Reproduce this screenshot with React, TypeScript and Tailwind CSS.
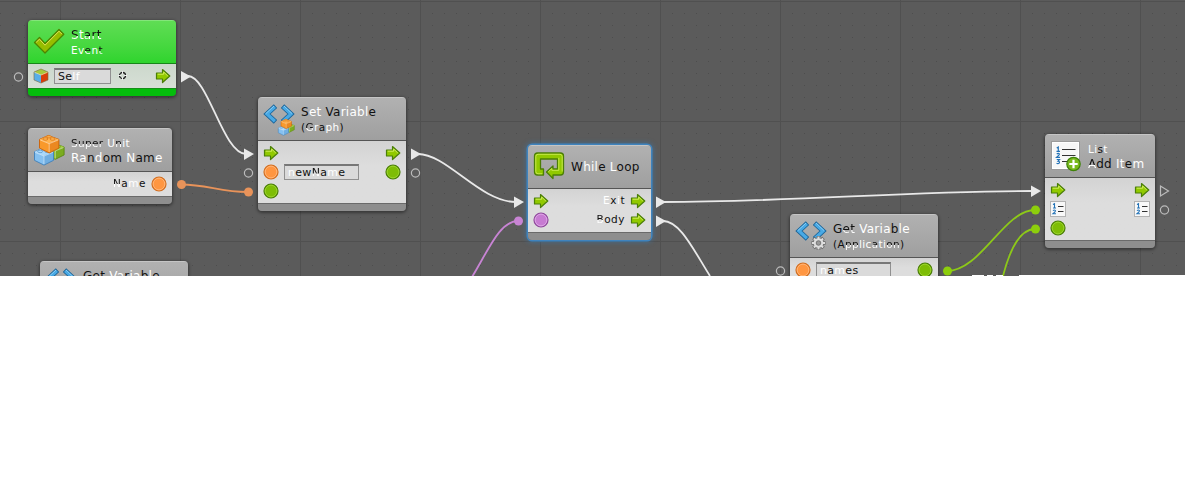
import type { ReactNode } from "react";

/* Lettering is alternately dark and light. "d:" dark, "w:" white, "m:" dark above / white below */
function Ink({ parts }: { parts: string[] }) {
  return (
    <span className="whitespace-pre">
      {parts.map((p, i) => {
        const tone = p[0];
        const cls =
          tone === "w"
            ? "text-white"
            : tone === "m"
              ? "bg-linear-to-b from-[#111] from-55% to-white to-60% bg-clip-text text-transparent"
              : "text-[#111]";
        return (
          <span key={i} className={cls}>
            {p.slice(2)}
          </span>
        );
      })}
    </span>
  );
}

function Arrow() {
  return (
    <svg width="16" height="16" viewBox="0 0 16 16" className="shrink-0">
      <path d="M1.500 5H7.500V1.500L14.800 8L7.500 14.500V11H1.500Z" fill="#91c900" stroke="#4b7f08" strokeWidth="1.2" strokeLinejoin="round" />
      <path d="M2.700 6.200H8.700V4L12.800 8" fill="none" stroke="#d0ee5b" strokeWidth="1" />
    </svg>
  );
}

const dots = {
  orange: ["#ff9641", "#d06e22", "#ffba80"],
  green: ["#7ebd05", "#4a7d08", "#a0d735"],
  purple: ["#c77bd2", "#8f4a9c", "#e1ace8"],
};

function Dot({ c }: { c: keyof typeof dots }) {
  const [fill, edge, lite] = dots[c];
  return (
    <svg width="16" height="16" viewBox="0 0 16 16" className="shrink-0">
      <circle cx="8" cy="8" r="7" fill={fill} stroke={edge} strokeWidth="1.2" />
      <circle cx="8" cy="8" r="5.800" fill="none" stroke={lite} strokeWidth=".8" />
    </svg>
  );
}

function Cube() {
  return (
    <svg width="16" height="16" viewBox="0 0 16 16" className="shrink-0">
      <path d="M1 4L8 1L15 4L8 7Z" fill="#a6c83c" />
      <path d="M1 4L8 7V15L1 12Z" fill="#58aee8" />
      <path d="M15 4L8 7V15L15 12Z" fill="#d93d0b" />
      <path d="M1 4L8 1L15 4V12L8 15L1 12Z" fill="none" stroke="#786b42" strokeWidth=".6" />
      <path d="M1.500 4.300L8 7L14.500 4.300" fill="none" stroke="#f1dc9b" strokeWidth=".7" />
    </svg>
  );
}

function MiniList() {
  return (
    <svg width="16" height="16" viewBox="0 0 16 16" className="shrink-0">
      <rect x=".5" y=".5" width="15" height="15" fill="#f8f8f8" stroke="#b3b3b3" />
      <path d="M8 5.500H13.500M8 10.500H13.500" stroke="#333" />
      <path d="M3 3.500L4.500 2.700V7M3 7H6M3 9.700Q4.500 8.300 5.500 9.700Q5.500 10.500 3 12.700H6" fill="none" stroke="#2473b7" strokeWidth="1.1" />
    </svg>
  );
}

function Brick({ x, y, s = 1, c }: { x: number; y: number; s?: number; c: string[] }) {
  return (
    <g transform={`translate(${x} ${y}) scale(${s})`}>
      <path d="M0 4L9 0L20 4V13L10 18L0 13Z" fill={c[0]} stroke={c[2]} strokeWidth="1" strokeLinejoin="round" />
      <path d="M0 4L9 0L20 4L10 8Z" fill={c[1]} />
      <path d="M10 8L20 4V13L10 18Z" fill={c[2]} opacity=".3" />
      <path d="M.7 4.600L10 8.400L19.400 4.600M10 8.400V17" fill="none" stroke="#fff" strokeOpacity=".55" strokeWidth=".9" />
      <ellipse cx="6" cy="3.600" rx="2.600" ry="1.300" fill={c[1]} stroke={c[2]} strokeWidth=".6" />
      <ellipse cx="13.500" cy="3.600" rx="2.600" ry="1.300" fill={c[1]} stroke={c[2]} strokeWidth=".6" />
      <ellipse cx="9.700" cy="1.300" rx="2.400" ry="1.200" fill={c[1]} stroke={c[2]} strokeWidth=".6" />
    </g>
  );
}

const blue = ["#85c1f1", "#a9d8fb", "#4383bc"];
const orange = ["#f9992b", "#ffb34f", "#cb640b"];
const green = ["#8abc26", "#a9d540", "#5a8914"];

function BrickStack() {
  return (
    <>
      <Brick x={13.5} y={9.5} s={0.88} c={green} />
      <Brick x={1.5} y={14} s={0.95} c={blue} />
      <Brick x={6.5} y={1.5} s={0.97} c={orange} />
    </>
  );
}

function Bricks() {
  return (
    <svg width="32" height="32" viewBox="0 0 32 32" className="shrink-0">
      <BrickStack />
    </svg>
  );
}

function Check() {
  return (
    <svg width="32" height="32" viewBox="0 0 32 32" className="shrink-0">
      <path d="M1.500 16.500L6.500 11.500L12 17.500L26 3.500L30.800 8.300L12 27Z" fill="#96bd00" stroke="#4d8500" strokeWidth="1.3" strokeLinejoin="round" />
      <path d="M3.200 16.300L6.500 13.200L12 19.200L26 5.200L28.800 8" fill="none" stroke="#e1df59" strokeWidth="1" />
    </svg>
  );
}

function Gear() {
  return (
    <g transform="translate(23.5 23)">
      <g stroke="#666" strokeWidth="3.6">
        <path d="M0 -7V7M-7 0H7M-5 -5L5 5M-5 5L5 -5" />
      </g>
      <g stroke="#ddd" strokeWidth="2.1">
        <path d="M0 -6.500V6.500M-6.500 0H6.500M-4.600 -4.600L4.600 4.600M-4.600 4.600L4.600 -4.600" />
      </g>
      <circle r="4.800" fill="#ddd" />
      <circle r="2.300" fill="#999" stroke="#666" strokeWidth=".8" />
    </g>
  );
}

function Variable({ badge }: { badge?: "bricks" | "gear" }) {
  return (
    <svg width="32" height="32" viewBox="0 0 32 32" className="shrink-0 overflow-visible">
      <g fill="none">
        <path d="M12.500 3.200L4 11L12.500 18.800M19.500 3.200L28 11L19.500 18.800" stroke="#1c6599" strokeWidth="5" />
        <path d="M11.900 3.700L4 11L11.900 18.300M20.100 3.700L28 11L20.100 18.300" stroke="#48a9e5" strokeWidth="3.2" />
        <path d="M11 3L2.700 10.700M21 3L29 10.500" stroke="#91d2f8" strokeWidth=".9" />
      </g>
      {badge === "gear" && <Gear />}
      {badge === "bricks" && (
        <g transform="translate(14.500 15.500) scale(.54)">
          <BrickStack />
        </g>
      )}
    </svg>
  );
}

function Loop() {
  return (
    <svg width="32" height="32" viewBox="0 0 32 32" className="shrink-0">
      <path
        d="M4.500 2H27.500Q30.500 2 30.500 5V21Q30.500 24 27.500 24H20V27.500L13.500 21L20 15V18H24.500V8H7.500V18H10.500V24H4.500Q1.500 24 1.500 21V5Q1.500 2 4.500 2Z"
        fill="#91c900" stroke="#4b7e05" strokeWidth="1.3" strokeLinejoin="round"
      />
      <path d="M9.300 22.800H5Q2.800 22.800 2.800 20.500V5.500Q2.800 3.300 5 3.300H27Q29.200 3.300 29.200 5.500V20.500M15.300 20.800L18.800 17.500V19.300H25.800V6.800" fill="none" stroke="#cdec55" strokeWidth=".9" />
    </svg>
  );
}

function ListAdd() {
  return (
    <svg width="32" height="32" viewBox="0 0 32 32" className="shrink-0 overflow-visible">
      <rect x="1.500" y="1.500" width="28" height="28" fill="#f7f7f7" stroke="#9b9b9b" />
      <rect x="2.500" y="2.500" width="26" height="26" fill="none" stroke="#fff" />
      <path d="M12 9.500H25.500M12 15.500H25.500M12 21.500H18" stroke="#333" />
      <path
        d="M6.700 8L8.300 7V11.300M6.500 11.300H10M6.700 14Q8.500 12.700 9.500 14Q9.500 15 6.700 17.300H10M6.700 19.500H9.500L8 21.200Q9.800 21.300 9.400 22.800Q8.300 24 6.500 23.300"
        fill="none" stroke="#2473b7" strokeWidth="1.2"
      />
      <circle cx="23.500" cy="24" r="6.700" fill="#79b91c" stroke="#3f8209" strokeWidth="1.2" />
      <path d="M23.500 19.800V28.200M19.300 24H27.700" stroke="#fff" strokeWidth="2.2" />
    </svg>
  );
}

function Field({ wide = false, children }: { wide?: boolean; children: ReactNode }) {
  return (
    <div className={`${wide ? "w-[75px]" : "w-[57px]"} mt-px ml-[5px] flex h-4 items-center border border-t-2 border-[#909090] border-t-[#777] bg-[#dadada] pl-[3px] text-[11px] leading-[13px] tracking-[0.3px]`}>
      {children}
    </div>
  );
}

function Row({ children }: { children: ReactNode }) {
  return <div className="flex h-[19px] items-center px-[5px]">{children}</div>;
}

interface NodeProps {
  place: string;
  icon: ReactNode;
  title: ReactNode;
  children?: ReactNode;
  event?: boolean;
  selected?: boolean;
}

function Node({ place, icon, title, children, event, selected }: NodeProps) {
  const glow = selected
    ? "shadow-[0_0_0_1.5px_#3f83bd,0_0_5px_2px_#397bb499]"
    : "shadow-[0_1px_3px_1px_rgba(0,0,0,0.38)]";
  const head = event
    ? "from-[#5fdd54] to-[#2ed42d] border-[#168718] border-t-[#83e57a]"
    : "from-[#b1b1b1] to-[#9f9f9f] border-[#555] border-t-[#c5c5c5]";
  return (
    <section className={`absolute overflow-hidden rounded-[4px] ${place} ${glow}`}>
      <header className={`flex h-11 items-start border-t border-b bg-linear-to-b pt-[5px] pl-[5px] ${head}`}>
        {icon}
        <div className="flex h-8 flex-col justify-center pt-px pl-1.5">{title}</div>
      </header>
      <div className={`pt-[2px] pb-[3px] ${event ? "bg-linear-to-b from-[#ccd8cc] to-[#d7dfd6]" : "bg-linear-to-b from-[#d3d3d3] to-[#dddddd] to-40%"}`}>
        {children}
      </div>
      <footer className={`h-2 border-t ${event ? "border-[#159018] bg-[#04bd0c]" : "border-[#6a6a6a] bg-[#8e8e8e]"}`} />
    </section>
  );
}

function Big({ parts }: { parts: string[] }) {
  return <div className="h-[15px] text-[12px] leading-[15px] tracking-[0.25px]"><Ink parts={parts} /></div>;
}
function Small({ parts }: { parts: string[] }) {
  return <div className="h-[15px] text-[10.5px] leading-[15px] tracking-[0.35px]"><Ink parts={parts} /></div>;
}
function Label({ parts }: { parts: string[] }) {
  return <div className="mr-[5px] ml-auto text-[10.5px] leading-[13px] tracking-[0.5px]"><Ink parts={parts} /></div>;
}

function Wires() {
  return (
    <svg width="1185" height="276" className="absolute inset-0">
      <g fill="none" strokeWidth="1.8">
        <g stroke="#e9e9e9">
          <path d="M188 76C208 76 223 154 246 154" />
          <path d="M418 154C447 154 480 202 516 202" />
          <path d="M663 202C790 202 910 191 1033 191" />
          <path d="M663 221C680 221 693 249 710 276" />
        </g>
        <path d="M181 184.500C207 184.500 220 192 248 192" stroke="#e8935a" />
        <path d="M518 221C500 221 489 249 472 277" stroke="#c884d4" />
        <path d="M947 271C981 271 1004 210 1035 210" stroke="#8dc918" />
        <path d="M1035 229C1020 229 1010 249 1003 276" stroke="#8dc918" />
      </g>
      <g fill="#e9e9e9">
        <path d="M181 71V82.500L191 76.500Z" />
        <path d="M244 148.500V160L254 154Z" />
        <path d="M411 148.500V160L421 154Z" />
        <path d="M514 196.500V208L524 202Z" />
        <path d="M656 196.500V208L666 202Z" />
        <path d="M656 215.500V227L666 221Z" />
        <path d="M1031 185.500V197L1041 191Z" />
      </g>
      <circle cx="181.500" cy="184.500" r="4.500" fill="#e8935a" />
      <circle cx="248.500" cy="192" r="4.500" fill="#e8935a" />
      <circle cx="518.500" cy="221" r="4.500" fill="#c884d4" />
      <g fill="#8dce0c">
        <circle cx="947.500" cy="271" r="4.500" />
        <circle cx="1035.500" cy="210" r="4.500" />
        <circle cx="1035.500" cy="229" r="4.500" />
      </g>
      <g fill="none" stroke="#bcbcbc" strokeWidth="1.2">
        <circle cx="18.500" cy="77" r="4.100" />
        <circle cx="248.500" cy="173" r="4.100" />
        <circle cx="415.500" cy="173" r="4.100" />
        <circle cx="780.500" cy="271" r="4.100" />
        <circle cx="1164.500" cy="210" r="4.100" />
        <path d="M1160.500 186V196L1168.500 191Z" />
      </g>
      <path d="M972 275.500H984M987 275.500H993M996 275.500H1003M1019 275.500H1185" stroke="#fff" />
    </svg>
  );
}

function Grid() {
  return (
    <svg width="1185" height="276" className="absolute inset-0">
      <defs>
        <pattern id="dots" width="12" height="12" patternUnits="userSpaceOnUse">
          <rect x="0" y="1" width="1" height="1" fill="#4d4d4d" />
        </pattern>
        <pattern id="lines" width="120" height="120" patternUnits="userSpaceOnUse" x="60" y="1">
          <path d="M.5 0V120M0 .5H120" stroke="#505050" />
        </pattern>
      </defs>
      <rect width="1185" height="276" fill="url(#dots)" />
      <rect width="1185" height="276" fill="url(#lines)" />
    </svg>
  );
}

export default function App() {
  return (
    <main className="h-[487px] w-[1185px] overflow-hidden bg-white font-['DejaVu_Sans',sans-serif]">
      <div className="relative h-[276px] overflow-hidden bg-[#5b5b5b]">
        <Grid />
        <Node event place="left-[28px] top-[20px] w-[148px]" icon={<Check />}
          title={<><Big parts={["m:S", "w:t", "m:art"]} /><Small parts={["w:Ev", "m:e", "w:n", "m:t"]} /></>}>
          <Row>
            <Cube />
            <Field><Ink parts={["d:Se", "w:lf"]} /></Field>
            <svg width="9" height="9" viewBox="0 0 9 9" className="ml-[7px]">
              <circle cx="4.500" cy="4.500" r="3" fill="none" stroke="#222" strokeWidth="1.300" />
              <path d="M4.500 0V3M4.500 6V9M0 4.500H3M6 4.500H9" stroke="#eee" />
            </svg>
            <div className="ml-auto flex"><Arrow /></div>
          </Row>
        </Node>
        <Node place="left-[28px] top-[128px] w-[144px]" icon={<Bricks />}
          title={<><Small parts={["m:Super", "w: U", "m:n", "w:it"]} /><Big parts={["w:Ra", "d:n", "w:d", "d:om", "w: N", "d:am", "w:e"]} /></>}>
          <Row><Label parts={["m:N", "d:a", "w:m", "d:e"]} /><Dot c="orange" /></Row>
        </Node>
        <Node place="left-[258px] top-[97px] w-[148px]" icon={<Variable badge="bricks" />}
          title={<><Big parts={["d:S", "w:et", "d: Va", "w:riabl", "d:e"]} /><Small parts={["d:(", "m:G", "w:r", "d:a", "w:ph", "d:)"]} /></>}>
          <Row><Arrow /><div className="ml-auto"><Arrow /></div></Row>
          <Row><Dot c="orange" /><Field wide><Ink parts={["w:n", "d:ew", "m:N", "d:a", "w:m", "d:e"]} /></Field><div className="ml-auto"><Dot c="green" /></div></Row>
          <Row><Dot c="green" /></Row>
        </Node>
        <Node selected place="left-[528px] top-[145px] w-[123px]" icon={<Loop />}
          title={<Big parts={["d:W", "w:hil", "d:e", "w: L", "d:oop"]} />}>
          <Row><Arrow /><Label parts={["w:E", "d:x", "w:i", "d:t"]} /><Arrow /></Row>
          <Row><Dot c="purple" /><Label parts={["m:B", "d:ody"]} /><Arrow /></Row>
        </Node>
        <Node place="left-[790px] top-[214px] w-[148px]" icon={<Variable badge="gear" />}
          title={<><Big parts={["d:G", "m:et", "w: Va", "w:ria", "d:b", "w:le"]} /><Small parts={["d:(A", "m:pp", "w:lic", "m:a", "w:ti", "m:on", "d:)"]} /></>}>
          <Row><Dot c="orange" /><Field wide><Ink parts={["w:n", "d:a", "w:m", "d:es"]} /></Field><div className="ml-auto"><Dot c="green" /></div></Row>
        </Node>
        <Node place="left-[1045px] top-[134px] w-[110px]" icon={<ListAdd />}
          title={<><Small parts={["w:Li", "d:s", "w:t"]} /><Big parts={["m:A", "d:dd", "w: It", "d:e", "w:m"]} /></>}>
          <Row><Arrow /><div className="ml-auto"><Arrow /></div></Row>
          <Row><MiniList /><div className="ml-auto"><MiniList /></div></Row>
          <Row><Dot c="green" /></Row>
        </Node>
        <Node place="left-[40px] top-[261px] w-[148px]" icon={<Variable />}
          title={<><Big parts={["d:Get", "w: Va", "d:r", "w:ia", "d:b", "w:l", "d:e"]} /><div className="h-[15px]" /></>} />
        <Wires />
      </div>
    </main>
  );
}
